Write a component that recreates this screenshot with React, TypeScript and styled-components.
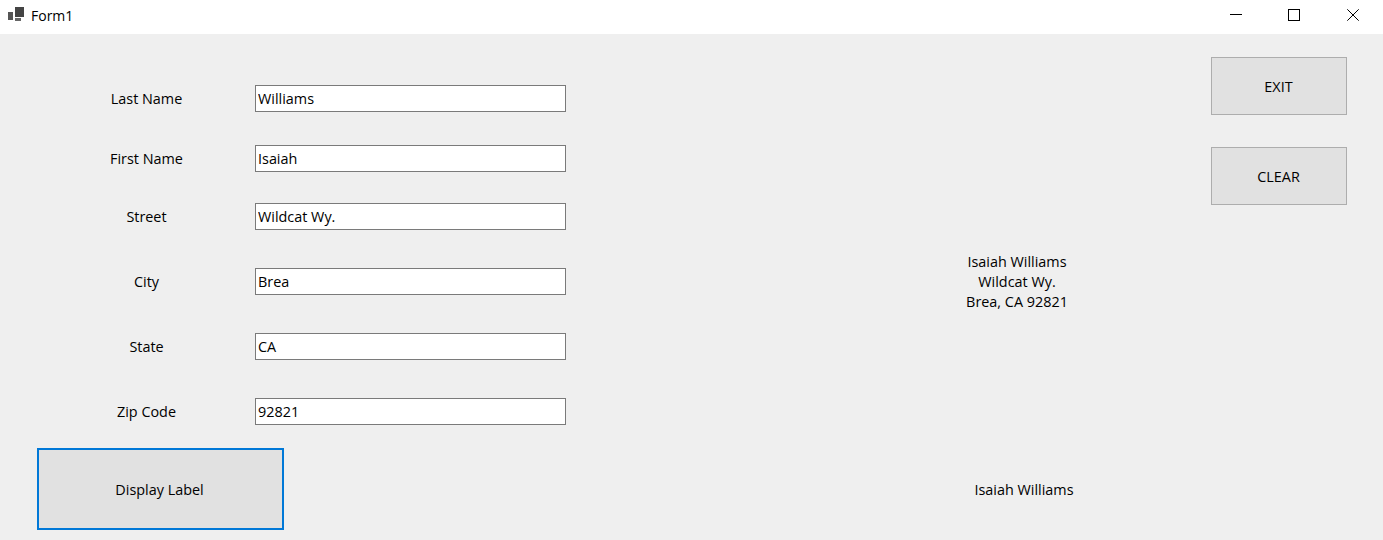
import styled, { createGlobalStyle } from "styled-components";

const GlobalStyle = createGlobalStyle`
  html, body {
    margin: 0;
    padding: 0;
    background: #efefef;
    overflow: hidden;
  }
  body {
    font-family: "Open Sans", "Noto Sans", sans-serif;
    font-size: 14.4px;
    color: #000;
  }
`;

const Window = styled.div`
  width: 1383px;
  height: 540px;
  display: flex;
  flex-direction: column;
`;

const TitleBar = styled.div`
  height: 34px;
  flex: none;
  background: #fff;
  display: flex;
  align-items: center;
  padding-right: 1px;
  box-sizing: border-box;
`;

const FormIcon = styled.svg`
  width: 16px;
  height: 16px;
  margin: -4px 7px 0 8px;
  flex: none;
`;

const TitleText = styled.span`
  font-size: 14px;
  flex: 1;
  margin-top: -4px;
`;

const WindowButton = styled.button<{ $inset?: number }>`
  width: 59px;
  height: 34px;
  padding: 0 0 4px ${props => props.$inset ?? 0}px;
  border: 0;
  background: none;
  display: flex;
  align-items: center;
  justify-content: center;
`;

const Body = styled.div`
  flex: 1;
  display: grid;
  grid-template-columns: 566px 645px 136px;
`;

const LeftColumn = styled.div`
  display: flex;
  flex-direction: column;
  padding-top: 51px;
`;

const FieldRow = styled.div<{ $top: number }>`
  display: flex;
  align-items: center;
  margin-top: ${props => props.$top}px;
`;

const FieldLabel = styled.label`
  width: 255px;
  padding-left: 86px;
  box-sizing: border-box;
  flex: none;
  & > span {
    display: block;
    width: 121px;
    text-align: center;
  }
`;

const FieldInput = styled.input`
  width: 311px;
  height: 27px;
  box-sizing: border-box;
  border: 1px solid #7a7a7a;
  border-radius: 0;
  background: #fff;
  padding: 0 2px;
  font: inherit;
  color: #000;
  outline: none;
`;

const DisplayButton = styled.button`
  width: 247px;
  height: 82px;
  margin: 23px 0 0 37px;
  padding: 0 2px 0 0;
  box-sizing: border-box;
  border: 2px solid #0078d7;
  background: #e1e1e1;
  font: inherit;
  color: #000;
`;

const OutputColumn = styled.div`
  display: flex;
  flex-direction: column;
  padding-top: 218px;
`;

const AddressLabel = styled.div`
  width: 200px;
  margin-left: 351px;
  line-height: 20px;
  text-align: center;
`;

const NameLabel = styled.div`
  width: 200px;
  margin: 168px 0 0 358px;
  line-height: 20px;
  text-align: center;
`;

const ActionColumn = styled.div`
  display: flex;
  flex-direction: column;
  gap: 32px;
  padding-top: 23px;
`;

const ActionButton = styled.button`
  width: 136px;
  height: 58px;
  padding: 0 1px 0 0;
  box-sizing: border-box;
  border: 1px solid #adadad;
  background: #e1e1e1;
  font: inherit;
  color: #000;
`;

const fields = [
  { label: "Last Name", value: "Williams", top: 0 },
  { label: "First Name", value: "Isaiah", top: 33 },
  { label: "Street", value: "Wildcat Wy.", top: 31 },
  { label: "City", value: "Brea", top: 38 },
  { label: "State", value: "CA", top: 38 },
  { label: "Zip Code", value: "92821", top: 38 },
];

export default function App() {
  return <Window>
    <GlobalStyle />
    <TitleBar>
      <FormIcon viewBox="0 0 16 16">
        <rect x="7" y="0" width="9" height="10" fill="#444" />
        <rect x="0" y="5" width="5" height="8" fill="#555" />
        <rect x="7" y="11" width="6" height="3" fill="#666" />
      </FormIcon>
      <TitleText>Form1</TitleText>
      <WindowButton aria-label="Minimize" $inset={2}>
        <svg width="12" height="12" viewBox="0 0 12 12"><path d="M0 5.5H12" stroke="#000" /></svg>
      </WindowButton>
      <WindowButton aria-label="Maximize">
        <svg width="12" height="12" viewBox="0 0 12 12"><rect x="0.5" y="0.5" width="11" height="11" fill="none" stroke="#000" /></svg>
      </WindowButton>
      <WindowButton aria-label="Close">
        <svg width="12" height="12" viewBox="0 0 12 12"><path d="M0.3 0.3L11.7 11.7M11.7 0.3L0.3 11.7" stroke="#000" /></svg>
      </WindowButton>
    </TitleBar>
    <Body>
      <LeftColumn>
        {fields.map(field => <FieldRow $top={field.top} key={field.label}>
          <FieldLabel><span>{field.label}</span></FieldLabel>
          <FieldInput readOnly defaultValue={field.value} />
        </FieldRow>)}
        <DisplayButton>Display Label</DisplayButton>
      </LeftColumn>
      <OutputColumn>
        <AddressLabel>Isaiah Williams<br />Wildcat Wy.<br />Brea, CA 92821</AddressLabel>
        <NameLabel>Isaiah Williams</NameLabel>
      </OutputColumn>
      <ActionColumn>
        <ActionButton>EXIT</ActionButton>
        <ActionButton>CLEAR</ActionButton>
      </ActionColumn>
    </Body>
  </Window>
}
